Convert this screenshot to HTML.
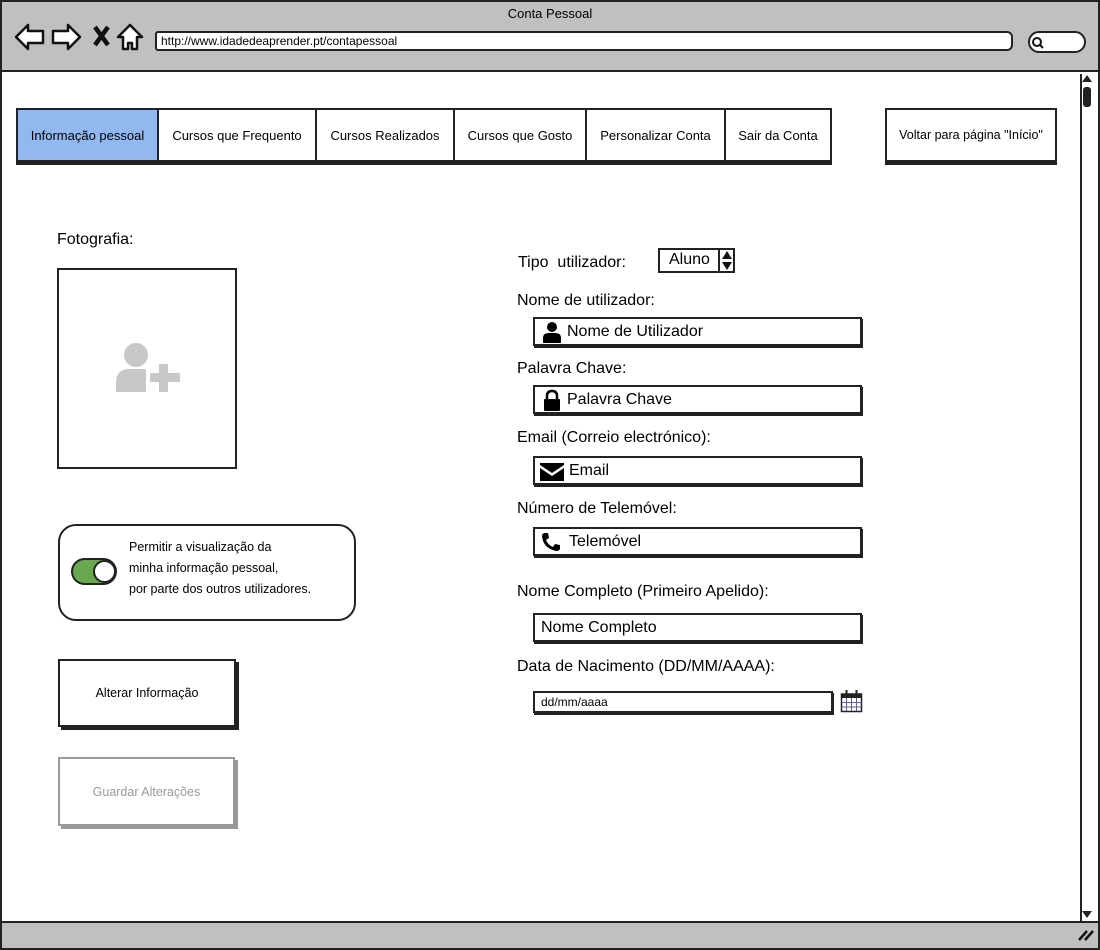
<!DOCTYPE html>
<html><head><meta charset="utf-8"><style>
*{box-sizing:border-box;margin:0;padding:0}
body{width:1100px;height:950px;position:relative;background:#fff;font-family:"Liberation Sans",sans-serif;color:#000;overflow:hidden}
.a{position:absolute}
.frame{left:0;top:0;width:1100px;height:950px;border:2px solid #222;background:#fff}
.top{left:2px;top:2px;width:1096px;height:70px;background:#c0c0c0;border-bottom:2px solid #222}
.bot{left:2px;top:921px;width:1096px;height:27px;background:#c0c0c0;border-top:2px solid #222}
.tab{top:108px;height:54px;border:2px solid #222;border-left:none;font-size:13px;display:flex;align-items:center;justify-content:center;background:#fff;box-shadow:0 3px 0 #222}
.lbl{font-size:16px;left:517px}
.inp{left:533px;width:329px;height:29px;border:2px solid #222;box-shadow:1px 2px 0 #222;font-size:16px;display:flex;align-items:center;padding-left:6px;gap:4px}
</style></head><body>
<div class="a frame"></div>
<div class="a top"></div>
<div class="a" style="left:0;width:1100px;top:6px;text-align:center;font-size:13px">Conta Pessoal</div>
<svg class="a" style="left:14px;top:22px" width="132" height="30" viewBox="0 0 132 30" fill="#fff" stroke="#111" stroke-width="2.5" stroke-linejoin="round">
<path d="M2 15 L14 3 V9 H29 V21 H14 V27 Z"/>
<path d="M66 15 L54 3 V9 H39 V21 H54 V27 Z"/>
<path d="M81 5 L94 23 M94 5 L81 23" stroke-width="4.5"/>
<path d="M104 15 L116 3 L128 15 H123 V27 H118 V21 H114 V27 H109 V15 Z"/>
</svg>
<div class="a" style="left:155px;top:31px;width:858px;height:20px;background:#fff;border:2px solid #222;border-radius:3px 6px 6px 3px;font-size:12px;padding-left:4px;line-height:16px">http://www.idadedeaprender.pt/contapessoal</div>
<div class="a" style="left:1028px;top:31px;width:58px;height:22px;background:#fff;border:2px solid #222;border-radius:12px"></div>
<svg class="a" style="left:1031px;top:36px" width="14" height="14"><circle cx="6" cy="6" r="4" fill="none" stroke="#111" stroke-width="2"/><path d="M9 9 L12 12" stroke="#111" stroke-width="2"/></svg>
<div class="a" style="left:1080px;top:74px;width:15px;height:847px;border-left:2px solid #222;background:#fff"></div>
<div class="a" style="left:1083px;top:87px;width:8px;height:20px;background:#222;border-radius:3px"></div>
<div class="a" style="left:1082px;top:75px;width:0;height:0;border:5px solid transparent;border-bottom:7px solid #222;border-top:none"></div>
<div class="a" style="left:1082px;top:911px;width:0;height:0;border:5px solid transparent;border-top:7px solid #222;border-bottom:none"></div>
<div class="a bot"></div>
<svg class="a" style="left:1076px;top:928px" width="20" height="14"><path d="M3 12 L11 3 M9 12 L17 3" stroke="#111" stroke-width="2.5"/></svg>

<div class="a tab" style="left:16px;width:143px;background:#93b8ef;border-left:2px solid #222">Informação pessoal</div>
<div class="a tab" style="left:159px;width:158px">Cursos que Frequento</div>
<div class="a tab" style="left:317px;width:138px">Cursos Realizados</div>
<div class="a tab" style="left:455px;width:132px">Cursos que Gosto</div>
<div class="a tab" style="left:587px;width:139px">Personalizar Conta</div>
<div class="a tab" style="left:726px;width:106px">Sair da Conta</div>
<div class="a tab" style="left:885px;width:172px;border-left:2px solid #222;font-size:12.5px">Voltar para página "Início"</div>

<div class="a" style="left:57px;top:231px;font-size:16px">Fotografia:</div>
<div class="a" style="left:57px;top:268px;width:180px;height:201px;border:2px solid #222"></div>
<svg class="a" style="left:114px;top:342px" width="68" height="52" viewBox="0 0 68 52">
<circle cx="22" cy="13" r="12" fill="#c8c8c8"/><path d="M2 50 V40 Q2 28 14 27 H30 Q38 28 40 32 V50 Z" fill="#c8c8c8"/>
<rect x="32" y="21" width="36" height="31" fill="#fff"/>
<rect x="45" y="22" width="9" height="28" fill="#c8c8c8"/><rect x="36" y="31" width="30" height="9" fill="#c8c8c8"/>
</svg>

<div class="a" style="left:58px;top:524px;width:298px;height:97px;border:2px solid #222;border-radius:18px"></div>
<div class="a" style="left:71px;top:558px;width:46px;height:27px;border:2px solid #222;border-radius:14px;background:#6aa84f"></div>
<div class="a" style="left:93px;top:560px;width:23px;height:23px;border:2px solid #222;border-radius:50%;background:#fff"></div>
<div class="a" style="left:129px;top:537px;font-size:12.5px;line-height:21px">Permitir a visualização da<br>minha informação pessoal,<br>por parte dos outros utilizadores.</div>

<div class="a" style="left:58px;top:659px;width:178px;height:68px;border:2px solid #222;box-shadow:3px 3px 0 #222;font-size:12.5px;display:flex;align-items:center;justify-content:center">Alterar Informação</div>
<div class="a" style="left:58px;top:757px;width:177px;height:69px;border:2px solid #999;box-shadow:3px 3px 0 #999;font-size:12.5px;color:#999;display:flex;align-items:center;justify-content:center">Guardar Alterações</div>

<div class="a lbl" style="top:254px;left:518px">Tipo&nbsp; utilizador:</div>
<div class="a" style="left:658px;top:248px;width:77px;height:25px;border:2px solid #222;font-size:16px;padding-left:9px;line-height:20px">Aluno</div>
<div class="a" style="left:718px;top:248px;width:2px;height:25px;background:#222"></div>
<svg class="a" style="left:721px;top:250px" width="12" height="21"><path d="M6 1 L11 9 H1Z M6 20 L11 12 H1Z" fill="#111"/></svg>

<div class="a lbl" style="top:292px">Nome de utilizador:</div>
<div class="a inp" style="top:317px"><svg width="22" height="22" viewBox="0 0 22 22"><circle cx="11" cy="6" r="5"/><path d="M2 22 V17 Q2 12 8 12 H14 Q20 12 20 17 V22Z"/></svg>Nome de Utilizador</div>
<div class="a lbl" style="top:360px">Palavra Chave:</div>
<div class="a inp" style="top:385px"><svg width="22" height="22" viewBox="0 0 22 22"><path d="M6 10 V7 Q6 2 11 2 Q16 2 16 7 V10" fill="none" stroke="#000" stroke-width="2.5"/><rect x="3" y="10" width="16" height="12" rx="1"/></svg>Palavra Chave</div>
<div class="a lbl" style="top:429px">Email (Correio electrónico):</div>
<div class="a inp" style="top:456px;padding-left:4px"><svg width="26" height="22" viewBox="0 0 26 22"><path d="M1 3 H25 V5 L13 13 L1 5Z M1 8 L13 16 L25 8 V21 H1Z"/></svg>Email</div>
<div class="a lbl" style="top:500px">Número de Telemóvel:</div>
<div class="a inp" style="top:527px;gap:8px"><svg width="20" height="20" viewBox="0 0 20 20"><path d="M3 1 L7 1 L8 6 L5 8 Q7 13 12 15 L14 12 L19 13 L19 17 Q18 19 15 19 Q2 16 1 4 Q1 2 3 1Z"/></svg>Telemóvel</div>
<div class="a lbl" style="top:583px">Nome Completo (Primeiro Apelido):</div>
<div class="a inp" style="top:613px">Nome Completo</div>
<div class="a lbl" style="top:658px">Data de Nacimento (DD/MM/AAAA):</div>
<div class="a inp" style="top:691px;width:300px;height:22px;font-size:12px">dd/mm/aaaa</div>
<svg class="a" style="left:840px;top:689px" width="23" height="24" viewBox="0 0 23 24"><rect x="1.5" y="5" width="20" height="17.5" fill="#fff" stroke="#222" stroke-width="1.5"/><rect x="1.5" y="5" width="20" height="4" fill="#222"/><path d="M6.5 1 V7 M16.5 1 V7" stroke="#222" stroke-width="2"/><path d="M6.5 9 V22 M11.5 9 V22 M16.5 9 V22 M1.5 13.5 H21.5 M1.5 18 H21.5" stroke="#6a5a9a" stroke-width="1"/></svg>
</body></html>
